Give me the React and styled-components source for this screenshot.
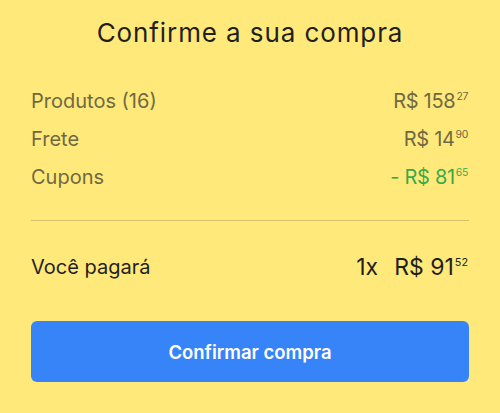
import React from 'react';
import styled, { createGlobalStyle } from 'styled-components';

const GlobalStyle = createGlobalStyle`
  html, body {
    margin: 0;
    padding: 0;
    background: #ffe97a;
  }
  body {
    font-family: Inter, "Open Sans", sans-serif;
  }
`;

const Page = styled.div`
  width: 500px;
  height: 413px;
  box-sizing: border-box;
  padding: 15px 31px 0;
  background: #ffe97a;
`;

const Title = styled.h1`
  margin: 0;
  text-align: center;
  font-size: 26px;
  font-weight: 400;
  letter-spacing: 0.9px;
  color: #1f1f1f;
  line-height: 36px;
`;

const Summary = styled.div`
  margin-top: 38px;
  display: flex;
  flex-direction: column;
  gap: 13px;
  padding-bottom: 30px;
  border-bottom: 1px solid #d3c26a;
`;

const Row = styled.div`
  display: flex;
  justify-content: space-between;
  align-items: center;
  font-size: 20px;
  line-height: 25px;
  color: ${p => (p.strong ? '#1f1f1f' : '#6f6943')};
`;

const Amount = styled.span`
  color: ${p => (p.green ? '#3aa94a' : 'inherit')};
  font-size: ${p => (p.big ? '23px' : '20px')};
  letter-spacing: ${p => (p.big ? '0' : '-0.3px')};
  padding-right: 1px;
`;

const Cents = styled.span`
  display: inline-block;
  font-size: ${p => (p.small ? '0.47em' : '0.52em')};
  position: relative;
  top: -0.8em;
  margin-left: 1px;
  vertical-align: baseline;
  line-height: 0;
`;

const Installments = styled.span`
  margin-right: 16px;
`;

const Total = styled(Row)`
  margin-top: 34px;
`;

const ConfirmButton = styled.button`
  margin-top: 41px;
  width: 100%;
  height: 61px;
  border: none;
  border-radius: 6px;
  background: #3784f8;
  color: #fff;
  font-family: Inter, "Open Sans", sans-serif;
  font-size: 18.5px;
  font-weight: 600;
  cursor: pointer;
`;

function Price({ value, cents, ...rest }) {
  return (
    <Amount {...rest}>
      {value}
      <Cents>{cents}</Cents>
    </Amount>
  );
}

export default function App() {
  return (
    <>
      <GlobalStyle />
      <Page>
        <Title>Confirme a sua compra</Title>
        <Summary>
          <Row>
            <span>Produtos (16)</span>
            <Price value="R$ 158" cents="27" />
          </Row>
          <Row>
            <span>Frete</span>
            <Price value="R$ 14" cents="90" />
          </Row>
          <Row>
            <span>Cupons</span>
            <Price green value="- R$ 81" cents="65" />
          </Row>
        </Summary>
        <Total strong>
          <span>Você pagará</span>
          <Amount big>
            <Installments>1x</Installments>
            R$ 91<Cents small>52</Cents>
          </Amount>
        </Total>
        <ConfirmButton>Confirmar compra</ConfirmButton>
      </Page>
    </>
  );
}
